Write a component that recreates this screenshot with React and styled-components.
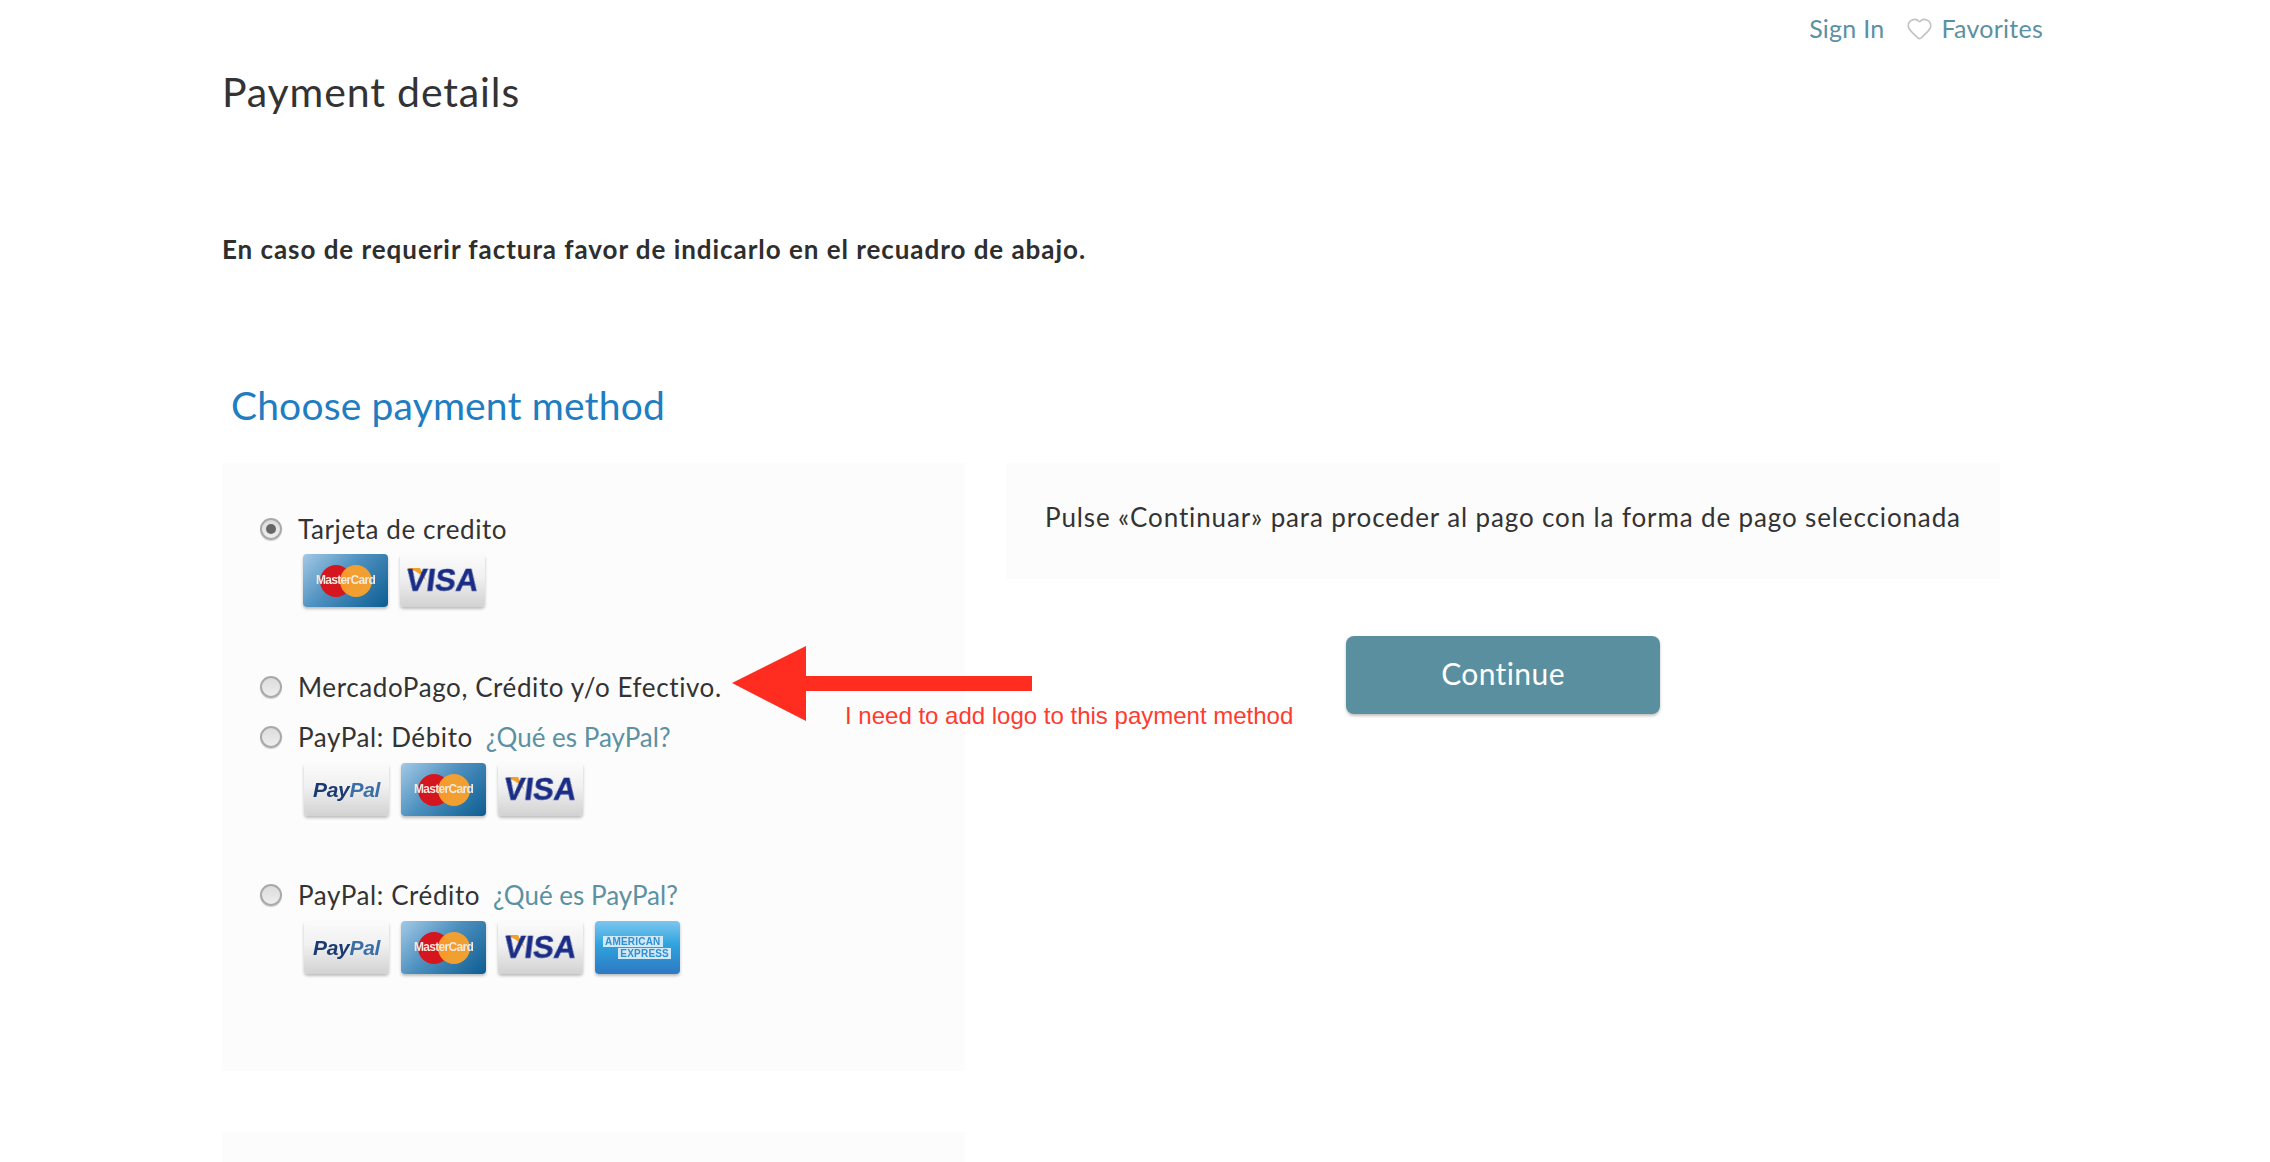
import React from "react";
import styled, { createGlobalStyle } from "styled-components";
import { Heart } from "lucide-react";

const GlobalStyle = createGlobalStyle`
  html, body {
    margin: 0;
    padding: 0;
    height: 1162px;
    overflow: hidden;
    background: #fff;
    font-family: "Lato", "Open Sans", sans-serif;
    color: #333;
  }
`;

const Page = styled.div`
  position: relative;
  height: 1162px;
  overflow: hidden;
  padding: 0 227px 0 222px;
`;

const TopNav = styled.nav`
  display: flex;
  justify-content: flex-end;
  align-items: center;
  height: 30px;
  padding-top: 13px;
  font-size: 25px;
`;

const NavLink = styled.a`
  display: flex;
  align-items: center;
  gap: 8px;
  color: #5b91a2;
  margin-left: ${(props) => props.$gap || 0}px;
  letter-spacing: 0.25px;
`;

const Title = styled.h1`
  margin: 0;
  padding-top: 31px;
  line-height: 36px;
  font-size: 41px;
  font-weight: 400;
  letter-spacing: 0.87px;
  color: #333;
`;

const Notice = styled.p`
  margin: 0;
  padding-top: 122px;
  height: 152px;
  line-height: 34px;
  font-size: 26px;
  font-weight: 700;
  letter-spacing: 0.95px;
  color: #2e2e2e;
`;

const SectionTitle = styled.h2`
  margin: 0;
  height: 79px;
  padding-left: 9px;
  line-height: 42px;
  font-size: 39px;
  font-weight: 400;
  letter-spacing: 0.15px;
  color: #1f7dc1;
`;

const Columns = styled.div`
  display: grid;
  grid-template-columns: 743px 994px;
  column-gap: 41px;
  align-items: start;
`;

const LeftColumn = styled.div`
  display: flex;
  flex-direction: column;
  gap: 61px;
`;

const MethodsPanel = styled.div`
  height: 608px;
  box-sizing: border-box;
  background: #fcfcfc;
  padding-top: 48px;
  padding-left: 38px;
`;

const EmptyPanel = styled.div`
  height: 200px;
  background: #fcfcfc;
`;

const Method = styled.div`
  margin-bottom: ${(props) => props.$after}px;
`;

const MethodRow = styled.label`
  display: flex;
  align-items: center;
  height: 36px;
  font-size: 26px;
  letter-spacing: 0.6px;
  color: #333;
`;

const Radio = styled.span`
  width: 22px;
  height: 22px;
  box-sizing: border-box;
  flex: none;
  display: flex;
  align-items: center;
  justify-content: center;
  margin-right: 16px;
  border-radius: 50%;
  border: 2px solid #a9a9a9;
  background: linear-gradient(#dcdcdc, #eee);
  box-shadow: 0 1px 1px rgba(0, 0, 0, 0.18);

  &::after {
    content: "";
    display: ${(props) => (props.$checked ? "block" : "none")};
    width: 10px;
    height: 10px;
    border-radius: 50%;
    background: #666;
  }
`;

const HelpLink = styled.a`
  margin-left: 13px;
  letter-spacing: 0;
  color: #5b91a2;
`;

const CardRow = styled.div`
  display: flex;
  gap: 12px;
  margin-top: ${(props) => (props.$paypal ? 8 : 7)}px;
  padding-left: ${(props) => (props.$paypal ? 44 : 43)}px;
`;

const Card = styled.div`
  width: 85px;
  height: 53px;
  position: relative;
  display: flex;
  align-items: center;
  justify-content: center;
  border-radius: 4px;
  overflow: hidden;
  flex: none;
  box-shadow: 0 2px 3px rgba(0, 0, 0, 0.25);
`;

const LightCard = styled(Card)`
  background: linear-gradient(#fbfbfb 0%, #f0f0f0 45%, #d2d2d2 100%);
`;

const MasterCardFace = styled(Card)`
  background: linear-gradient(135deg, #a3c9e6 0%, #4d90bf 45%, #0d5d92 100%);
`;

const AmexFace = styled(Card)`
  flex-direction: column;
  background: linear-gradient(#7cc6ee 0%, #2fa3de 45%, #2e78c2 100%);
`;

const Circle = styled.span`
  width: 32px;
  height: 32px;
  border-radius: 50%;
  background: ${(props) => props.$color};
  margin-left: ${(props) => props.$shift || 0}px;
  opacity: ${(props) => props.$opacity || 1};
`;

const MasterCardText = styled.span`
  position: absolute;
  left: 0;
  right: 0;
  top: 19px;
  text-align: center;
  font-family: "Liberation Sans", sans-serif;
  font-size: 12px;
  line-height: 14px;
  font-weight: 700;
  letter-spacing: -0.7px;
  color: #f5eadf;
  filter: blur(0.5px);
`;

const VisaText = styled.span`
  display: inline-block;
  position: relative;
  transform: skewX(-7deg);
  font-family: "Liberation Sans", sans-serif;
  font-size: 31px;
  font-weight: 700;
  -webkit-text-stroke: 0.4px #1a2d86;
  color: #1a2d86;
  filter: blur(0.5px);
`;

const VisaFlag = styled.svg`
  position: absolute;
  left: 7px;
  top: 13px;
`;

const PayPalText = styled.span`
  font-family: "Liberation Sans", sans-serif;
  font-size: 21px;
  font-weight: 700;
  font-style: italic;
  letter-spacing: -0.3px;
  color: #1c3a72;
  filter: blur(0.5px);

  b {
    color: #3b6ea5;
  }
`;

const AmexLine = styled.span`
  align-self: ${(props) => (props.$end ? "flex-end" : "flex-start")};
  margin: ${(props) => (props.$end ? "1px 9px 0 0" : "0 0 0 8px")};
  padding: 0 2px;
  font-family: "Liberation Sans", sans-serif;
  font-size: 10px;
  line-height: 11px;
  font-weight: 700;
  letter-spacing: 0.2px;
  color: #2f8fd0;
  background: #cfe9f8;
  filter: blur(0.5px);
`;

const ActionColumn = styled.div`
  display: flex;
  flex-direction: column;
  align-items: center;
  gap: 57px;
`;

const HintBox = styled.div`
  width: 100%;
  height: 116px;
  box-sizing: border-box;
  padding-bottom: 8px;
  display: flex;
  align-items: center;
  justify-content: center;
  background: #fcfcfc;
  font-size: 26px;
  letter-spacing: 0.87px;
  color: #333;
`;

const ContinueButton = styled.button`
  width: 314px;
  height: 78px;
  padding: 0 0 5px;
  border: none;
  border-radius: 8px;
  background: #5a8f9f;
  box-shadow: 0 2px 3px rgba(0, 0, 0, 0.25);
  color: #fff;
  font-family: inherit;
  font-size: 30px;
  font-weight: 400;
  letter-spacing: 0.4px;
`;

/* annotation pasted over the screenshot */
const Arrow = styled.svg`
  position: absolute;
  left: 732px;
  top: 646px;
`;

const ArrowNote = styled.span`
  position: absolute;
  left: 845px;
  top: 702px;
  font-family: "Liberation Sans", sans-serif;
  font-size: 24px;
  line-height: 28px;
  color: #ff3b30;
`;

const MasterCard = () => (
  <MasterCardFace>
    <Circle $color="#d5161f" />
    <Circle $color="#f9a02c" $shift={-12} $opacity={0.96} />
    <MasterCardText>MasterCard</MasterCardText>
  </MasterCardFace>
);

const Visa = () => (
  <LightCard>
    <VisaFlag width="22" height="16" viewBox="0 0 22 16">
      <path d="M0 1 L13 1 L20 15 C16 8 8 3 0 1 Z" fill="#f3a02b" />
    </VisaFlag>
    <VisaText>VISA</VisaText>
  </LightCard>
);

const PayPal = () => (
  <LightCard>
    <PayPalText>
      Pay<b>Pal</b>
    </PayPalText>
  </LightCard>
);

const Amex = () => (
  <AmexFace>
    <AmexLine>AMERICAN</AmexLine>
    <AmexLine $end>EXPRESS</AmexLine>
  </AmexFace>
);

export default function App() {
  return (
    <Page>
      <GlobalStyle />
      <TopNav>
        <NavLink>Sign In</NavLink>
        <NavLink $gap={22}>
          <Heart size={27} strokeWidth={1.4} color="#c2c2c2" />
          Favorites
        </NavLink>
      </TopNav>
      <Title>Payment details</Title>
      <Notice>En caso de requerir factura favor de indicarlo en el recuadro de abajo.</Notice>
      <SectionTitle>Choose payment method</SectionTitle>
      <Columns>
        <LeftColumn>
          <MethodsPanel>
            <Method $after={62}>
              <MethodRow>
                <Radio $checked />
                Tarjeta de credito
              </MethodRow>
              <CardRow>
                <MasterCard />
                <Visa />
              </CardRow>
            </Method>
            <Method $after={14}>
              <MethodRow>
                <Radio />
                MercadoPago, Crédito y/o Efectivo.
              </MethodRow>
            </Method>
            <Method $after={61}>
              <MethodRow>
                <Radio />
                PayPal: Débito
                <HelpLink>¿Qué es PayPal?</HelpLink>
              </MethodRow>
              <CardRow $paypal>
                <PayPal />
                <MasterCard />
                <Visa />
              </CardRow>
            </Method>
            <Method $after={0}>
              <MethodRow>
                <Radio />
                PayPal: Crédito
                <HelpLink>¿Qué es PayPal?</HelpLink>
              </MethodRow>
              <CardRow $paypal>
                <PayPal />
                <MasterCard />
                <Visa />
                <Amex />
              </CardRow>
            </Method>
          </MethodsPanel>
          <EmptyPanel />
        </LeftColumn>
        <ActionColumn>
          <HintBox>Pulse «Continuar» para proceder al pago con la forma de pago seleccionada</HintBox>
          <ContinueButton>Continue</ContinueButton>
        </ActionColumn>
      </Columns>
      <Arrow width="300" height="75" viewBox="0 0 300 75">
        <path d="M0 37 L74 0 L74 30 L300 30 L300 45 L74 45 L74 75 Z" fill="#ff2d20" />
      </Arrow>
      <ArrowNote>I need to add logo to this payment method</ArrowNote>
    </Page>
  );
}
